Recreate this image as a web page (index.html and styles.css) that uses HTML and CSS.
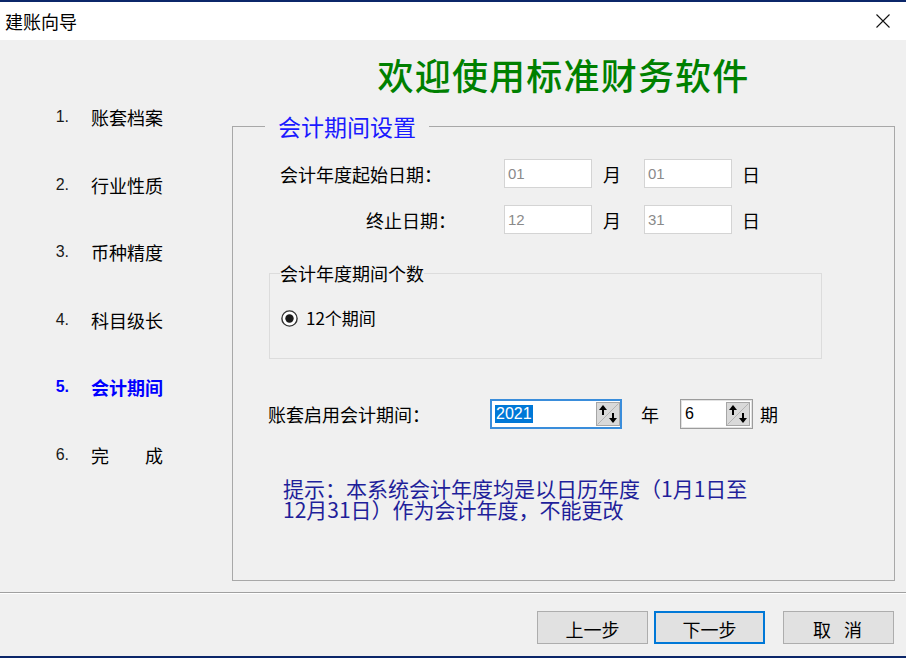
FILE: index.html
```html
<!DOCTYPE html>
<html lang="zh-CN">
  <head>
    <meta charset="UTF-8" />
    <title>建账向导</title>
    <link rel="stylesheet" href="styles.css">
  </head>
  <body>
    <div class="window">
      <!-- 标题栏 -->
      <div class="titlebar">
        <span>建账向导</span>
        <svg class="close" width="14" height="14" viewBox="0 0 14 14">
          <path d="M0.5 0.5 L13.5 13.5 M13.5 0.5 L0.5 13.5" stroke="#111" stroke-width="1.1" fill="none" />
        </svg>
      </div>

      <div class="main">
        <!-- 左侧步骤 -->
        <div class="nav">
          <div class="nav-item"><span class="nav-num">1.</span>账套档案</div>
          <div class="nav-item"><span class="nav-num">2.</span>行业性质</div>
          <div class="nav-item"><span class="nav-num">3.</span>币种精度</div>
          <div class="nav-item"><span class="nav-num">4.</span>科目级长</div>
          <div class="nav-item active"><span class="nav-num">5.</span>会计期间</div>
          <div class="nav-item"><span class="nav-num">6.</span>完　　成</div>
        </div>

        <div class="content">
          <div class="welcome">欢迎使用标准财务软件</div>

          <fieldset class="period">
            <legend class="period-title">会计期间设置</legend>
            <div class="period-body">
              <div class="date-row">
                <span class="date-label">会计年度起始日期：</span>
                <span class="text-box">01</span>
                <span class="unit">月</span>
                <span class="text-box">01</span>
                <span class="unit last">日</span>
              </div>
              <div class="date-row">
                <span class="date-label indent">终止日期：</span>
                <span class="text-box">12</span>
                <span class="unit">月</span>
                <span class="text-box">31</span>
                <span class="unit last">日</span>
              </div>

              <fieldset class="count">
                <legend class="count-title">会计年度期间个数</legend>
                <div class="radio-row">
                  <svg width="17" height="17" viewBox="0 0 17 17">
                    <circle cx="8.5" cy="8.5" r="7.6" fill="#fff" stroke="#333" stroke-width="1.4" />
                    <circle cx="8.5" cy="8.5" r="4.2" fill="#1a1a1a" />
                  </svg>
                  <span class="radio-text">12个期间</span>
                </div>
              </fieldset>

              <div class="spin-row">
                <span class="spin-label">账套启用会计期间：</span>
                <span class="spin-box focused">
                  <span class="selected">2021</span>
                  <svg class="spin" width="24" height="24" viewBox="0 0 24 24">
                    <rect x="0.5" y="0.5" width="23" height="23" fill="#d9d9d9" stroke="#a6a6a6" />
                    <path d="M1.5 22.5 L22.5 1.5" stroke="#b3b3b3" stroke-width="1" />
                    <path d="M7 13 V6" stroke="#000" stroke-width="2" />
                    <path d="M3 8 L7 3 L11 8 Z" fill="#000" />
                    <path d="M17 11 V18" stroke="#000" stroke-width="2" />
                    <path d="M13 16 L17 21 L21 16 Z" fill="#000" />
                  </svg>
                </span>
                <span class="spin-unit">年</span>
                <span class="spin-box small">
                  <span class="plain">6</span>
                  <svg class="spin" width="24" height="24" viewBox="0 0 24 24">
                    <rect x="0.5" y="0.5" width="23" height="23" fill="#d9d9d9" stroke="#a6a6a6" />
                    <path d="M1.5 22.5 L22.5 1.5" stroke="#b3b3b3" stroke-width="1" />
                    <path d="M7 13 V6" stroke="#000" stroke-width="2" />
                    <path d="M3 8 L7 3 L11 8 Z" fill="#000" />
                    <path d="M17 11 V18" stroke="#000" stroke-width="2" />
                    <path d="M13 16 L17 21 L21 16 Z" fill="#000" />
                  </svg>
                </span>
                <span class="spin-unit last">期</span>
              </div>

              <div class="tip">提示：本系统会计年度均是以日历年度（1月1日至<br />12月31日）作为会计年度，不能更改</div>
            </div>
          </fieldset>
        </div>
      </div>

      <div class="separator"></div>

      <!-- 底部按钮 -->
      <div class="footer">
        <button class="btn">上一步</button>
        <button class="btn default">下一步</button>
        <button class="btn cancel">取&ensp;消</button>
      </div>
    </div>
  </body>
</html>
```

FILE: styles.css
```css
body {
  margin: 0;
  width: 906px;
  height: 658px;
  overflow: hidden;
  background: #0b2669;
  font-family: "Noto Sans CJK SC", sans-serif;
  color: #000;
}

.window {
  margin-top: 2px;
  height: 654px;
  display: flex;
  flex-direction: column;
  background: #f0f0f0;
}

.titlebar {
  height: 38px;
  flex: none;
  background: #fff;
  display: flex;
  align-items: center;
  justify-content: space-between;
  padding: 0 16px 0 5px;
  font-size: 18px;
}

.main {
  height: 552px;
  flex: none;
  display: flex;
}

/* 左侧步骤 */
.nav {
  width: 232px;
  flex: none;
  box-sizing: border-box;
  padding: 68px 0 0 42px;
  display: flex;
  flex-direction: column;
  gap: 49.6px;
}

.nav-item {
  display: flex;
  align-items: center;
  height: 18px;
  font-size: 18px;
  line-height: 18px;
}

.nav-num {
  width: 27px;
  margin-right: 22px;
  text-align: right;
  font-family: "Liberation Sans", sans-serif;
  font-size: 16px;
  color: #1a1a1a;
}

.nav-item.active,
.nav-item.active .nav-num {
  color: #0000ff;
  font-weight: bold;
}

.content {
  flex: 1;
  padding: 16px 11px 0 0;
}

.welcome {
  height: 36px;
  font-size: 36px;
  line-height: 36px;
  text-align: center;
  color: #008000;
  font-weight: 500;
  letter-spacing: 1.2px;
  margin-bottom: 21px;
}

/* 会计期间设置 */
.period {
  margin: 0;
  padding: 0;
  height: 468px;
  box-sizing: border-box;
  border: 1px solid #a8a8a8;
}

.period-title {
  margin-left: 32px;
  padding: 0 13px;
  font-size: 23px;
  line-height: 26px;
  color: #1a1aff;
}

.period-body {
  padding: 20px 0 0 47px;
}

.date-row {
  display: flex;
  align-items: center;
  height: 29px;
  font-size: 18px;
}

.date-row + .date-row {
  margin-top: 17px;
}

.date-label {
  width: 224px;
  box-sizing: border-box;
}

.date-label.indent {
  padding-left: 86px;
}

.text-box {
  width: 88px;
  height: 29px;
  box-sizing: border-box;
  border: 1px solid #d4d4d4;
  background: #fff;
  color: #8a8a8a;
  font-family: "Liberation Sans", sans-serif;
  font-size: 15px;
  padding-left: 3px;
  display: flex;
  align-items: center;
}

.unit {
  margin: 0 23px 0 11px;
}

.unit.last {
  margin: 0 0 0 10px;
}

.count {
  margin: 30px 0 0 -11px;
  padding: 0;
  width: 553px;
  height: 95px;
  box-sizing: border-box;
  border: 1px solid #dcdcdc;
}

.count-title {
  margin-left: 10px;
  padding: 0;
  font-size: 18px;
  line-height: 18px;
}

.radio-row {
  display: flex;
  align-items: center;
  padding: 27px 0 0 11px;
}

.radio-text {
  margin-left: 8px;
  font-size: 17px;
  line-height: 18px;
}

.spin-row {
  display: flex;
  align-items: center;
  margin: 40px 0 0 -12px;
  height: 30px;
  font-size: 18px;
}

.spin-label {
  width: 222px;
}

.spin-box {
  width: 132px;
  height: 30px;
  box-sizing: border-box;
  background: #fff;
  display: flex;
  align-items: center;
  justify-content: space-between;
  font-family: "Liberation Sans", sans-serif;
  font-size: 16px;
}

.spin-box.focused {
  border: 2px solid #3a8ddb;
  padding: 0 0 0 3px;
}

.spin-box.small {
  width: 73px;
  border: 1px solid #9c9c9c;
  box-shadow: inset 0 0 0 1px #e2e2e2;
  padding: 0 2px 0 4px;
}

.selected {
  background: #0078d7;
  color: #fff;
  line-height: 18px;
  padding: 0 1px;
}

.spin-unit {
  margin: 0 21px 0 19px;
}

.spin-unit.last {
  margin: 0 0 0 7px;
}

.tip {
  margin: 49px 0 0 -44px;
  padding-left: 47px;
  font-size: 21px;
  line-height: 21px;
  color: #1f1f9a;
}

.separator {
  height: 0;
  flex: none;
  border-top: 1px solid #a0a0a0;
  border-bottom: 1px solid #fff;
}

/* 底部按钮 */
.footer {
  height: 62px;
  flex: none;
  box-sizing: border-box;
  display: flex;
  justify-content: flex-end;
  padding: 17px 12px 0 0;
}

.btn {
  width: 111px;
  height: 33px;
  box-sizing: border-box;
  background: #e1e1e1;
  border: 1px solid #adadad;
  font-family: "Noto Sans CJK SC", sans-serif;
  font-size: 18px;
  line-height: 18px;
  padding: 3px 0 0;
  color: #000;
}

.btn.default {
  margin-left: 6px;
  border: 2px solid #0078d7;
}

.btn.cancel {
  margin-left: 18px;
  letter-spacing: 2px;
}
```
